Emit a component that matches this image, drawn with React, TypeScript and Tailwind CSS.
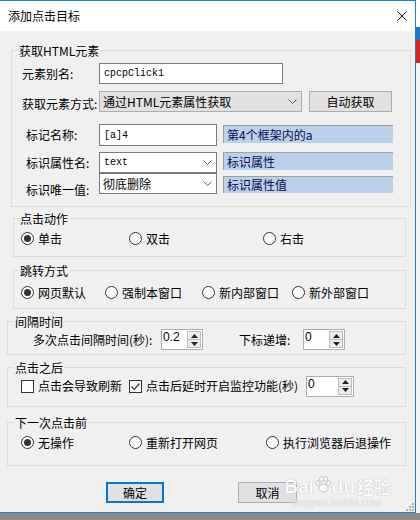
import type { ReactNode } from 'react'

const mono = "font-['Liberation_Mono',monospace] text-[10px]"

function Chevron() {
  return (
    <svg width="9" height="5" viewBox="0 0 9 5" className="shrink-0">
      <path d="M0.5 0.5L4.5 4.5L8.5 0.5" stroke="#606060" fill="none" />
    </svg>
  )
}

function Radio({ checked = false, label }: { checked?: boolean; label: string }) {
  return (
    <div className="flex items-center">
      <span className="flex h-[13px] w-[13px] items-center justify-center rounded-full border border-[#333] bg-white">
        {checked && <span className="h-[7px] w-[7px] rounded-full bg-[#333]" />}
      </span>
      <span className="ml-[4px] leading-[14px]">{label}</span>
    </div>
  )
}

function Check({ checked = false, label }: { checked?: boolean; label: string }) {
  return (
    <div className="flex items-center">
      <span className="flex h-[13px] w-[13px] items-center justify-center border border-[#333] bg-white">
        {checked && (
          <svg width="11" height="11" viewBox="0 0 11 11">
            <polyline points="1.5,5.5 4.2,8.3 9.5,2.5" stroke="#333" strokeWidth="1.2" fill="none" />
          </svg>
        )}
      </span>
      <span className="ml-[4px] leading-[14px]">{label}</span>
    </div>
  )
}

function Spin({ value, w }: { value: string; w: string }) {
  return (
    <div className={`flex h-[21px] border border-[#abadb3] bg-white ${w}`}>
      <span className="flex-1 pl-[1px] font-['Liberation_Sans',sans-serif] text-[12px] leading-[15px]">{value}</span>
      <div className="my-[1px] mr-[1px] flex w-[14px] flex-col border border-[#bdbdbd]">
        <div className="flex flex-1 items-center justify-center border-b border-[#bdbdbd] bg-[#ececec]">
          <svg width="7" height="4" viewBox="0 0 7 4">
            <path d="M3.5 0L7 4H0z" fill="#222" />
          </svg>
        </div>
        <div className="flex flex-1 items-center justify-center bg-[#ececec]">
          <svg width="7" height="4" viewBox="0 0 7 4">
            <path d="M0 0H7L3.5 4z" fill="#222" />
          </svg>
        </div>
      </div>
    </div>
  )
}

function Group({
  title,
  className,
  legendClass,
  children,
}: {
  title: string
  className: string
  legendClass: string
  children: ReactNode
}) {
  return (
    <fieldset className={`border border-[#dcdcdc] ${className}`}>
      <legend className={`px-[1px] leading-[15px] ${legendClass}`}>{title}</legend>
      {children}
    </fieldset>
  )
}

export default function App() {
  return (
    <div className="flex h-[520px] w-[420px] flex-col overflow-hidden bg-[#8a8a8a] font-['Noto_Sans_CJK_SC',sans-serif] text-[12px] text-black">
      <div className="flex h-[513px] shrink-0">
        <div className="flex w-[416px] flex-col border-y border-r border-[#1a7fd4]">
          {/* title bar */}
          <div className="flex h-[30px] shrink-0 items-center justify-between bg-white pl-[8px] pr-[8px]">
            <span className="leading-[14px]">添加点击目标</span>
            <svg width="10" height="10" viewBox="0 0 10 10">
              <path d="M0.5 0.5L9.5 9.5M9.5 0.5L0.5 9.5" stroke="#111" strokeWidth="1" />
            </svg>
          </div>

          <div className="relative flex-1 bg-[#f0f0f0] pt-[12px]">
            <Group title="获取HTML元素" className="ml-[11px] w-[400px] pb-[12px]" legendClass="ml-[6px]">
              <div className="mt-[5px] flex h-[21px] items-center pl-[10px]">
                <span className="w-[77px] leading-[14px]">元素别名:</span>
                <div className={`flex h-[21px] w-[184px] items-center border border-[#7a7a7a] bg-white pl-[4px] ${mono}`}>
                  cpcpClick1
                </div>
              </div>
              <div className="mt-[7px] flex h-[21px] items-center pl-[10px]">
                <span className="w-[77px] pt-[5px] leading-[14px]">获取元素方式:</span>
                <div className="flex h-[21px] w-[203px] items-center justify-between border border-[#adadad] bg-[#e1e1e1] pl-[3px] pr-[4px]">
                  <span className="leading-[14px]">通过HTML元素属性获取</span>
                  <Chevron />
                </div>
                <div className="ml-[7px] flex h-[21px] w-[83px] items-center justify-center border border-[#adadad] bg-[#e1e1e1]">
                  自动获取
                </div>
              </div>
              <div className="mt-[12px] flex h-[22px] items-center pl-[14px]">
                <span className="w-[73px] leading-[14px]">标记名称:</span>
                <div className={`flex h-[22px] w-[118px] items-center border border-[#7a7a7a] bg-white pl-[4px] ${mono}`}>
                  [a]4
                </div>
                <div className="ml-[6px] mt-[1px] flex h-[18px] w-[170px] items-center self-start border-l border-t border-[#a0a0a0] bg-[#bad1ea] pl-[3px] text-[#0b0b55]">
                  第4个框架内的a
                </div>
              </div>
              <div className="mt-[6px] flex h-[21px] items-center pl-[14px]">
                <span className="w-[73px] leading-[14px]">标识属性名:</span>
                <div className={`flex h-[21px] w-[118px] items-center justify-between border border-[#7a7a7a] bg-white pl-[4px] pr-[4px] ${mono}`}>
                  <span>text</span>
                  <Chevron />
                </div>
                <div className="ml-[6px] flex h-[18px] w-[170px] items-center self-start border-l border-t border-[#a0a0a0] bg-[#bad1ea] pl-[3px] text-[#0b0b55]">
                  标识属性
                </div>
              </div>
              <div className="flex h-[21px] items-center pl-[14px]">
                <span className="w-[73px] pt-[12px] leading-[14px]">标识唯一值:</span>
                <div className="flex h-[21px] w-[118px] items-center justify-between border border-[#7a7a7a] bg-white pl-[3px] pr-[4px]">
                  <span className="leading-[14px]">彻底删除</span>
                  <Chevron />
                </div>
                <div className="ml-[6px] mt-[3px] flex h-[17px] w-[170px] items-center self-start border-l border-t border-[#a0a0a0] bg-[#bad1ea] pl-[3px] text-[#0b0b55]">
                  标识属性值
                </div>
              </div>
            </Group>

            <Group title="点击动作" className="ml-[13px] mt-[4px] w-[393px] pb-[11px]" legendClass="ml-[5px]">
              <div className="mt-[6px] flex h-[13px] items-center pl-[7px]">
                <div className="w-[108px]">
                  <Radio checked label="单击" />
                </div>
                <div className="w-[134px]">
                  <Radio label="双击" />
                </div>
                <Radio label="右击" />
              </div>
            </Group>

            <Group title="跳转方式" className="ml-[13px] mt-[6px] w-[393px] pb-[9px]" legendClass="ml-[5px]">
              <div className="mt-[8px] flex h-[13px] items-center pl-[7px]">
                <div className="w-[84px]">
                  <Radio checked label="网页默认" />
                </div>
                <div className="w-[97px]">
                  <Radio label="强制本窗口" />
                </div>
                <div className="w-[90px]">
                  <Radio label="新内部窗口" />
                </div>
                <Radio label="新外部窗口" />
              </div>
            </Group>

            <Group title="间隔时间" className="ml-[7px] mt-[5px] w-[399px] pb-[4px]" legendClass="ml-[6px]">
              <div className="flex h-[21px] items-center pl-[25px]">
                <span className="w-[128px] leading-[14px]">多次点击间隔时间(秒):</span>
                <Spin value="0.2" w="w-[42px]" />
                <span className="ml-[36px] w-[64px] leading-[14px]">下标递增:</span>
                <Spin value="0" w="w-[42px]" />
              </div>
            </Group>

            <Group title="点击之后" className="ml-[7px] mt-[5px] w-[399px] pb-[11px]" legendClass="ml-[6px]">
              <div className="mt-[2px] flex h-[18px] items-center pl-[13px]">
                <div className="w-[108px]">
                  <Check label="点击会导致刷新" />
                </div>
                <div className="w-[177px]">
                  <Check checked label="点击后延时开启监控功能(秒)" />
                </div>
                <Spin value="0" w="w-[48px]" />
              </div>
            </Group>

            <Group title="下一次点击前" className="ml-[7px] mt-[8px] w-[399px] pb-[16px]" legendClass="ml-[6px]">
              <div className="mt-[6px] flex h-[13px] items-center pl-[13px]">
                <div className="w-[108px]">
                  <Radio checked label="无操作" />
                </div>
                <div className="w-[137px]">
                  <Radio label="重新打开网页" />
                </div>
                <Radio label="执行浏览器后退操作" />
              </div>
            </Group>

            <div className="mt-[16px] flex pl-[106px]">
              <div className="flex h-[21px] w-[58px] items-center justify-center border-2 border-[#0078d7] bg-[#e1e1e1]">
                确定
              </div>
              <div className="ml-[74px] flex h-[21px] w-[59px] items-center justify-center border border-[#adadad] bg-[#e1e1e1]">
                取消
              </div>
            </div>

            {/* watermark */}
            <div className="pointer-events-none absolute bottom-[4px] right-[24px] flex flex-col items-center text-[#fbfbfb] [text-shadow:0_0_1px_#9a9a9a]">
              <div className="flex items-end font-['Liberation_Sans',sans-serif] text-[19px] font-bold leading-[20px]">
                <span>Bai</span>
                <svg width="16" height="18" viewBox="0 0 16 18" className="mx-[1px] mb-[3px]">
                  <g fill="#fbfbfb" stroke="#a8a8a8" strokeWidth="0.6">
                    <ellipse cx="3" cy="7" rx="2" ry="2.5" />
                    <ellipse cx="6.5" cy="3" rx="2" ry="2.5" />
                    <ellipse cx="10.5" cy="3" rx="2" ry="2.5" />
                    <ellipse cx="13.5" cy="7" rx="2" ry="2.5" />
                    <ellipse cx="8.5" cy="12" rx="4.5" ry="4" />
                  </g>
                </svg>
                <span>du</span>
                <span className="ml-[2px] font-['Noto_Sans_CJK_SC',sans-serif] text-[17px]">经验</span>
              </div>
              <span className="font-['Liberation_Sans',sans-serif] text-[10px] leading-[11px] tracking-[0.5px]">
                jingyan.baidu.com
              </span>
            </div>

            {/* size grip */}
            <svg width="8" height="8" viewBox="0 0 8 8" className="absolute bottom-[1px] right-[1px]">
              <g fill="#b4b4b4">
                <rect x="6" y="0" width="2" height="2" />
                <rect x="3" y="3" width="2" height="2" />
                <rect x="6" y="3" width="2" height="2" />
                <rect x="0" y="6" width="2" height="2" />
                <rect x="3" y="6" width="2" height="2" />
                <rect x="6" y="6" width="2" height="2" />
              </g>
            </svg>
          </div>
        </div>

        {/* background strip right of the window */}
        <div className="flex flex-1 flex-col bg-[#f4f4f4]">
          <div className="h-[27px] bg-white" />
          <div className="h-[13px] bg-[#1d76c6]" />
          <div className="h-[23px] bg-[#d6251f]" />
        </div>
      </div>
    </div>
  )
}
